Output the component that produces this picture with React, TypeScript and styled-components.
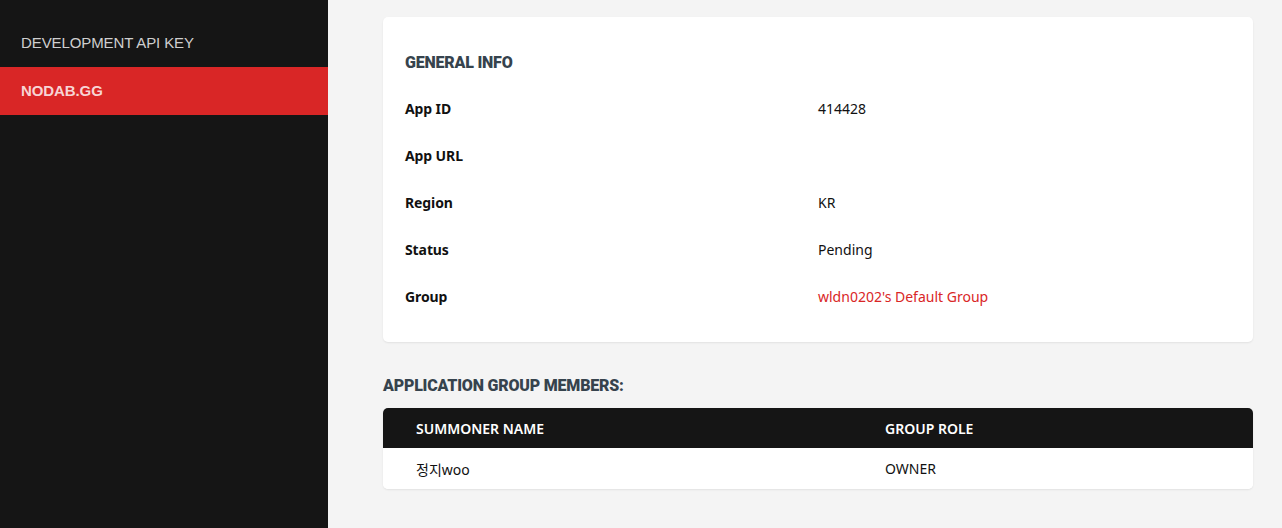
import React from "react";
import styled, { createGlobalStyle } from "styled-components";

const Global = createGlobalStyle`
  html, body { margin: 0; padding: 0; background: #f4f4f4; }
  body { font-family: "Noto Sans", "Noto Sans CJK KR", sans-serif; }
  * { box-sizing: border-box; }
`;

const Layout = styled.div`
  display: flex;
  width: 1282px;
  height: 528px;
  overflow: hidden;
  background: #f4f4f4;
`;

const Sidebar = styled.nav`
  width: 328px;
  flex: none;
  background: #151515;
  padding-top: 19px;
  display: flex;
  flex-direction: column;
`;

const NavItem = styled.div<{ $active?: boolean }>`
  height: 48px;
  display: flex;
  align-items: center;
  padding: 0 0 2px 21px;
  font-family: "Liberation Sans", Arial, sans-serif;
  font-size: 15px;
  letter-spacing: -0.1px;
  font-weight: ${(p) => (p.$active ? 700 : 400)};
  color: ${(p) => (p.$active ? "#f7d4d4" : "#cfcfcf")};
  background: ${(p) => (p.$active ? "#d92626" : "transparent")};
`;

const Main = styled.main`
  flex: 1;
  padding: 17px 29px 0 55px;
  display: flex;
  flex-direction: column;
`;

const Card = styled.section`
  background: #fff;
  border-radius: 5px;
  box-shadow: 0 1px 2px rgba(0, 0, 0, 0.08);
  padding: 22px;
`;

const Heading = styled.h2<{ $block?: boolean }>`
  margin: 0;
  font-family: Roboto, "Noto Sans", sans-serif;
  font-weight: 900;
  font-size: 16px;
  letter-spacing: -0.2px;
  color: #36434d;
  display: flex;
  align-items: center;
  height: ${(p) => (p.$block ? "22px" : "46px")};
`;

const InfoGrid = styled.div`
  display: grid;
  grid-template-columns: 1fr 1fr;
  grid-auto-rows: 47px;
  align-items: center;
`;

const Label = styled.div`
  font-size: 14px;
  font-weight: 700;
  color: #111;
  letter-spacing: -0.1px;
`;

const Value = styled.div<{ $accent?: boolean }>`
  font-size: 14px;
  color: ${(p) => (p.$accent ? "#d92626" : "#111")};
`;

const Section = styled.div`
  margin-top: 32px;
  display: flex;
  flex-direction: column;
  gap: 12px;
`;

const Table = styled.div`
  background: #fff;
  border-radius: 5px;
  overflow: hidden;
  box-shadow: 0 1px 2px rgba(0, 0, 0, 0.08);
`;

const Row = styled.div<{ $head?: boolean }>`
  display: grid;
  grid-template-columns: 469px 1fr;
  align-items: center;
  height: ${(p) => (p.$head ? "40px" : "41px")};
  background: ${(p) => (p.$head ? "#151515" : "#fff")};
  color: ${(p) => (p.$head ? "#fff" : "#111")};
  font-size: 14px;
  font-weight: ${(p) => (p.$head ? 600 : 400)};
`;

const Cell = styled.div`
  padding-left: 33px;
`;

const info: { label: string; value: string; accent?: boolean }[] = [
  { label: "App ID", value: "414428" },
  { label: "App URL", value: "" },
  { label: "Region", value: "KR" },
  { label: "Status", value: "Pending" },
  { label: "Group", value: "wldn0202's Default Group", accent: true },
];

export default function App() {
  return (
    <>
      <Global />
      <Layout>
        <Sidebar>
          <NavItem>DEVELOPMENT API KEY</NavItem>
          <NavItem $active>NODAB.GG</NavItem>
        </Sidebar>
        <Main>
          <Card>
            <Heading>GENERAL INFO</Heading>
            <InfoGrid>
              {info.map((r) => (
                <React.Fragment key={r.label}>
                  <Label>{r.label}</Label>
                  <Value $accent={r.accent}>{r.value}</Value>
                </React.Fragment>
              ))}
            </InfoGrid>
          </Card>
          <Section>
            <Heading $block>APPLICATION GROUP MEMBERS:</Heading>
            <Table>
              <Row $head>
                <Cell>SUMMONER NAME</Cell>
                <Cell>GROUP ROLE</Cell>
              </Row>
              <Row>
                <Cell>정지woo</Cell>
                <Cell>OWNER</Cell>
              </Row>
            </Table>
          </Section>
        </Main>
      </Layout>
    </>
  );
}
